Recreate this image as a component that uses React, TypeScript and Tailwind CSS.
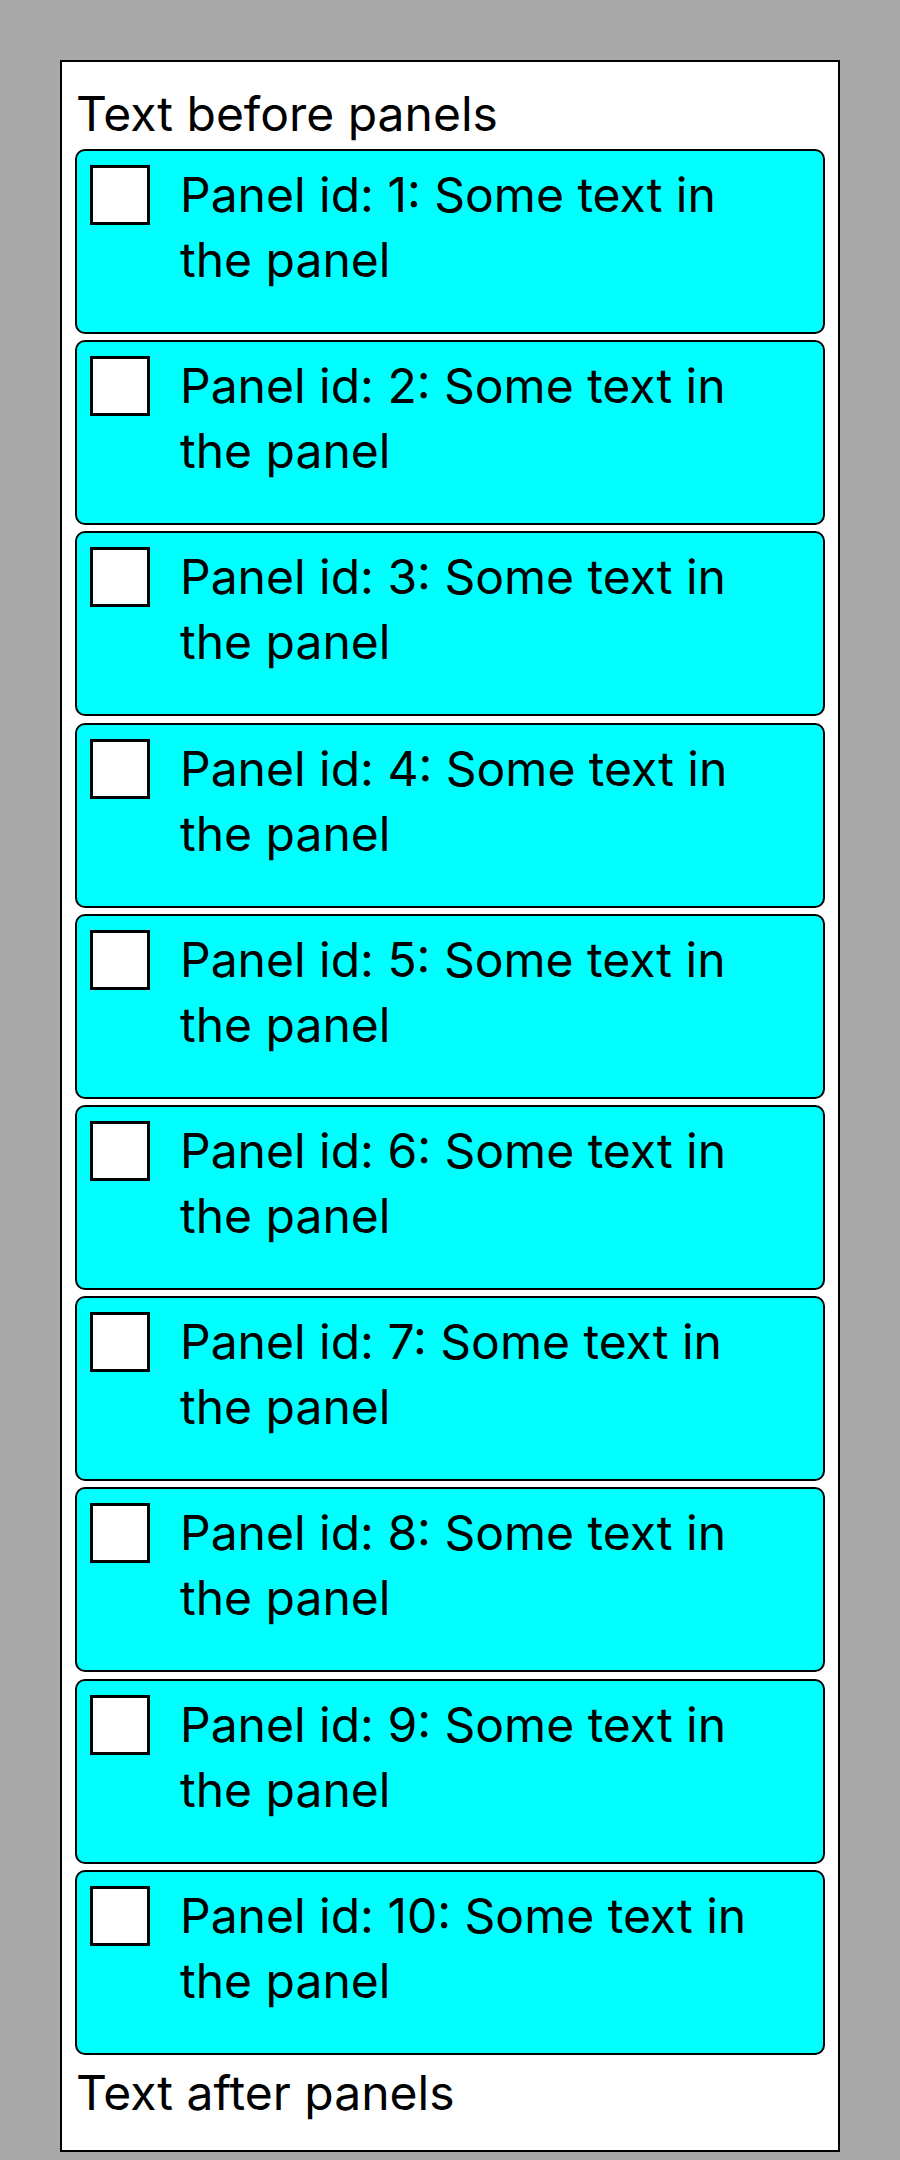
import React from "react";

export default function App() {
  const ids = [1, 2, 3, 4, 5, 6, 7, 8, 9, 10];
  return (
    <div className="min-h-[2160px] bg-[#a9a9a9] px-[60px] pt-[60px] pb-[7px]" style={{ fontFamily: "Inter, 'Noto Sans', sans-serif" }}>
      <div className="border-2 border-black bg-white pt-[19px] pb-[25px] px-[13px] text-black text-[48px] leading-[65px]">
        <div className="pl-[1px]">Text before panels</div>
        <div className="mt-[3px] flex flex-col gap-[6.2px]">
          {ids.map((id) => (
            <div key={id} className="h-[185px] rounded-[10px] border-2 border-black bg-[#00ffff] pl-[13px] pr-[12px] pt-[11px] flex items-start">
              <div className="mt-[3px] w-[60px] h-[60px] shrink-0 border-[3px] border-black bg-white" />
              <div className="ml-[30px] flex-1 pr-[20px]">{`Panel id: ${id}: Some text in the panel`}</div>
            </div>
          ))}
        </div>
        <div className="mt-[5px] pl-[1px]">Text after panels</div>
      </div>
    </div>
  );
}
